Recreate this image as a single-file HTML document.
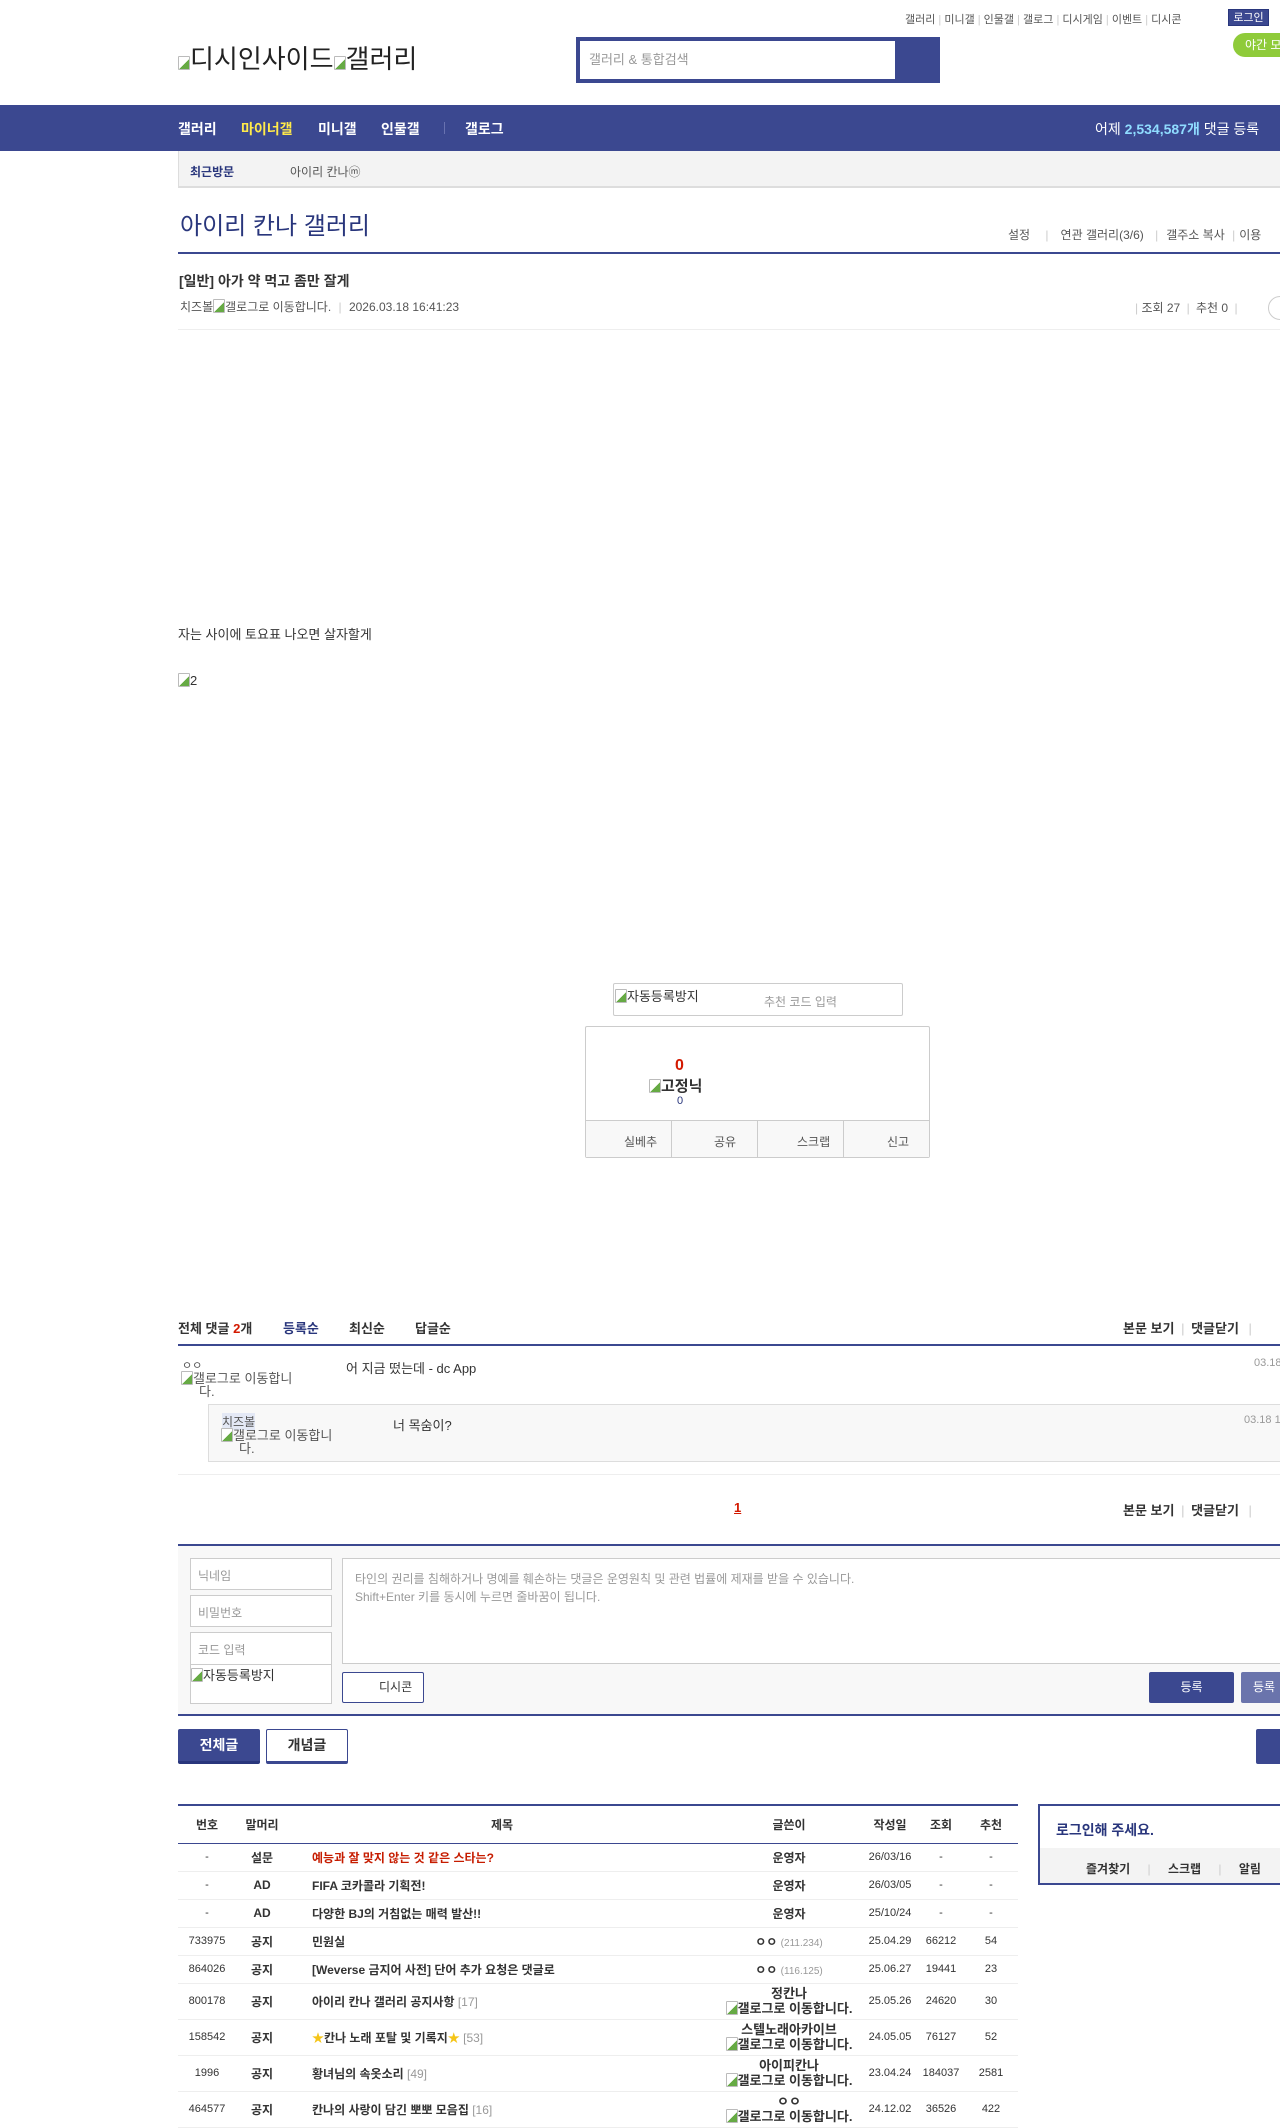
<!DOCTYPE html>
<html><head><meta charset="utf-8"><style>
*{margin:0;padding:0;box-sizing:border-box}
body{width:1280px;height:2125px;overflow:hidden;position:relative;background:#fff;font-family:"Liberation Sans","Noto Sans CJK KR","NanumGothic",sans-serif;color:#333;font-size:12px}
.a{position:absolute;white-space:nowrap}
.bi{display:inline-block;width:12px;height:14px;border:1px solid #bbb;border-radius:1px;vertical-align:-2px;background:linear-gradient(135deg,#fff 55%,#6a4 56%)}
.navy{background:#3b4890}
.b{font-weight:bold}
table{border-collapse:collapse}
</style></head><body>
<div class="a" style="left:905px;top:11px;font-size:11px;color:#555">갤러리 <span style="color:#ccc">|</span> 미니갤 <span style="color:#ccc">|</span> 인물갤 <span style="color:#ccc">|</span> 갤로그 <span style="color:#ccc">|</span> 디시게임 <span style="color:#ccc">|</span> 이벤트 <span style="color:#ccc">|</span> 디시콘</div>
<div class="a navy" style="left:1228px;top:9px;width:41px;height:17px;color:#fff;font-size:11px;line-height:17px;text-align:center;border:1px solid #29367c">로그인</div>
<div class="a" style="left:1233px;top:33px;width:60px;height:24px;background:#8fcb3a;border-radius:12px;color:#fff;font-size:12px;line-height:24px;padding-left:12px">야간 모드</div>
<div class="a" style="left:178px;top:39px;font-size:26px;color:#222"><span class="bi"></span>디시인사이드<span class="bi"></span>갤러리</div>
<div class="a navy" style="left:576px;top:37px;width:364px;height:46px"></div>
<div class="a" style="left:580px;top:41px;width:315px;height:38px;background:#fff;font-size:13px;color:#999;line-height:38px;padding-left:9px">갤러리 &amp; 통합검색</div>
<div class="a navy" style="left:0;top:105px;width:1280px;height:46px"></div>
<div class="a b" style="left:178px;top:119px;font-size:14px;color:#fff">갤러리</div>
<div class="a b" style="left:241px;top:119px;font-size:14px;color:#ffea4a">마이너갤</div>
<div class="a b" style="left:318px;top:119px;font-size:14px;color:#fff">미니갤</div>
<div class="a b" style="left:381px;top:119px;font-size:14px;color:#fff">인물갤</div>
<div class="a" style="left:444px;top:122px;width:1px;height:12px;background:#6872b0"></div>
<div class="a b" style="left:465px;top:119px;font-size:14px;color:#fff">갤로그</div>
<div class="a" style="left:1095px;top:119px;font-size:14px;color:#fff">어제 <b style="color:#8fdcff">2,534,587개</b> 댓글 등록</div>
<div class="a" style="left:178px;top:151px;width:1102px;height:37px;background:#f3f3f3;border-left:1px solid #ddd;border-bottom:2px solid #ddd"></div>
<div class="a b" style="left:190px;top:163px;font-size:12px;color:#29367c">최근방문</div>
<div class="a" style="left:290px;top:163px;font-size:12px;color:#555">아이리 칸나ⓜ</div>
<div class="a" style="left:180px;top:206px;font-size:24px;color:#29367c">아이리 칸나 갤러리</div>
<div class="a" style="left:1008px;top:226px;font-size:12px;color:#555">설정 <span style="color:#ccc;margin:0 12px">|</span>연관 갤러리(3/6) <span style="color:#ccc;margin:0 8px">|</span>갤주소 복사 <span style="color:#ccc;margin:0 4px">|</span>이용</div>
<div class="a navy" style="left:178px;top:252px;width:1102px;height:2px"></div>
<div class="a b" style="left:179px;top:271px;font-size:14px;color:#333">[일반] 아가 약 먹고 좀만 잘게</div>
<div class="a" style="left:180px;top:298px;font-size:12px;color:#555">치즈볼<span class="bi"></span>갤로그로 이동합니다. <span style="color:#ccc;margin:0 4px">|</span> 2026.03.18 16:41:23</div>
<div class="a" style="left:1135px;top:299px;font-size:12px;color:#555"><span style="color:#ccc">|</span> 조회 27 <span style="color:#ccc;margin:0 3px">|</span> 추천 0 <span style="color:#ccc;margin:0 3px">|</span></div>
<div class="a" style="left:1268px;top:296px;width:24px;height:24px;border:1px solid #ccc;border-radius:12px"></div>
<div class="a" style="left:178px;top:329px;width:1102px;height:1px;background:#eee"></div>
<div class="a" style="left:178px;top:624px;font-size:13px;color:#333">자는 사이에 토요표 나오면 살자할게</div>
<div class="a" style="left:178px;top:673px;font-size:13px;color:#333"><span class="bi"></span>2</div>
<div class="a" style="left:613px;top:983px;width:290px;height:33px;border:1px solid #ccc;border-radius:2px"></div>
<div class="a" style="left:615px;top:986px;font-size:13px;color:#333"><span class="bi"></span>자동등록방지</div>
<div class="a" style="left:764px;top:993px;font-size:12px;color:#999">추천 코드 입력</div>
<div class="a" style="left:585px;top:1026px;width:345px;height:132px;border:1px solid #ccc;border-radius:2px"></div>
<div class="a b" style="left:675px;top:1057px;font-size:16px;color:#d31900">0</div>
<div class="a b" style="left:649px;top:1075px;font-size:15px;color:#333"><span class="bi"></span>고정닉</div>
<div class="a" style="left:677px;top:1095px;font-size:11px;color:#29367c">0</div>
<div class="a" style="left:586px;top:1120px;width:343px;height:37px;background:#f8f8f8;border-top:1px solid #ccc"></div>
<div class="a" style="left:671px;top:1120px;width:1px;height:37px;background:#ccc"></div>
<div class="a" style="left:757px;top:1120px;width:1px;height:37px;background:#ccc"></div>
<div class="a" style="left:843px;top:1120px;width:1px;height:37px;background:#ccc"></div>
<div class="a" style="left:624px;top:1133px;font-size:12px;color:#555">실베추</div>
<div class="a" style="left:714px;top:1133px;font-size:12px;color:#555">공유</div>
<div class="a" style="left:797px;top:1133px;font-size:12px;color:#555">스크랩</div>
<div class="a" style="left:887px;top:1133px;font-size:12px;color:#555">신고</div>
<div class="a b" style="left:178px;top:1318px;font-size:13px;color:#333">전체 댓글 <span style="color:#d31900">2</span>개</div>
<div class="a b" style="left:283px;top:1318px;font-size:13px;color:#29367c">등록순</div>
<div class="a b" style="left:349px;top:1318px;font-size:13px;color:#333">최신순</div>
<div class="a b" style="left:415px;top:1318px;font-size:13px;color:#333">답글순</div>
<div class="a b" style="left:1123px;top:1318px;font-size:13px;color:#333">본문 보기 <span style="color:#ccc;font-weight:normal;margin:0 3px">|</span> 댓글닫기 <span style="color:#ccc;font-weight:normal;margin:0 6px">|</span></div>
<div class="a navy" style="left:178px;top:1344px;width:1102px;height:2px"></div>
<div class="a" style="left:182px;top:1357px;font-size:11px;color:#555">ㅇㅇ</div>
<div class="a" style="left:181px;top:1371px;font-size:13px;color:#555;line-height:13px"><span class="bi"></span>갤로그로 이동합니<br>&nbsp;&nbsp;&nbsp;&nbsp;&nbsp;다.</div>
<div class="a" style="left:346px;top:1358px;font-size:13px;color:#333">어 지금 떴는데 - dc App</div>
<div class="a" style="left:1254px;top:1357px;font-size:11px;color:#999">03.18</div>
<div class="a" style="left:208px;top:1404px;width:1080px;height:58px;background:#f8f8f8;border:1px solid #ddd"></div>
<div class="a" style="left:222px;top:1413px;font-size:12px;color:#555;background:#e3e8f5">치즈볼</div>
<div class="a" style="left:221px;top:1428px;font-size:13px;color:#555;line-height:13px"><span class="bi"></span>갤로그로 이동합니<br>&nbsp;&nbsp;&nbsp;&nbsp;&nbsp;다.</div>
<div class="a" style="left:393px;top:1415px;font-size:13px;color:#333">너 목숨이?</div>
<div class="a" style="left:1244px;top:1414px;font-size:11px;color:#999">03.18 1</div>
<div class="a" style="left:178px;top:1474px;width:1102px;height:1px;background:#eee"></div>
<div class="a b" style="left:734px;top:1500px;font-size:13px;color:#d31900;text-decoration:underline">1</div>
<div class="a b" style="left:1123px;top:1500px;font-size:13px;color:#333">본문 보기 <span style="color:#ccc;font-weight:normal;margin:0 3px">|</span> 댓글닫기 <span style="color:#ccc;font-weight:normal;margin:0 6px">|</span></div>
<div class="a" style="left:178px;top:1544px;width:1102px;height:172px;background:#f8f8f8;border-top:2px solid #3b4890;border-bottom:2px solid #3b4890"></div>
<div class="a" style="left:190px;top:1558px;width:142px;height:32px;background:#fff;border:1px solid #ccc;font-size:12px;color:#999;padding:8px 7px">닉네임</div>
<div class="a" style="left:190px;top:1595px;width:142px;height:32px;background:#fff;border:1px solid #ccc;font-size:12px;color:#999;padding:8px 7px">비밀번호</div>
<div class="a" style="left:190px;top:1632px;width:142px;height:72px;background:#fff;border:1px solid #ccc;font-size:12px;color:#999;padding:8px 7px">코드 입력</div>
<div class="a" style="left:190px;top:1664px;width:142px;height:1px;background:#ccc"></div>
<div class="a" style="left:191px;top:1665px;font-size:13px;color:#333"><span class="bi"></span>자동등록방지</div>
<div class="a" style="left:342px;top:1558px;width:960px;height:106px;background:#fff;border:1px solid #ccc;font-size:12px;color:#999;padding:11px 12px;line-height:18px">타인의 권리를 침해하거나 명예를 훼손하는 댓글은 운영원칙 및 관련 법률에 제재를 받을 수 있습니다.<br>Shift+Enter 키를 동시에 누르면 줄바꿈이 됩니다.</div>
<div class="a" style="left:342px;top:1672px;width:82px;height:31px;background:#fff;border:1px solid #3b4890;border-radius:2px;font-size:12px;color:#333;line-height:29px;padding-left:36px">디시콘</div>
<div class="a navy" style="left:1149px;top:1672px;width:85px;height:31px;border-radius:2px;font-size:12px;color:#fff;line-height:31px;text-align:center">등록</div>
<div class="a" style="left:1241px;top:1672px;width:60px;height:31px;background:#6a74ac;border-radius:2px;font-size:12px;color:#fff;line-height:31px;padding-left:12px">등록</div>
<div class="a navy b" style="left:178px;top:1729px;width:82px;height:35px;color:#fff;font-size:14px;line-height:32px;text-align:center;border-bottom:3px solid #29367c;border-radius:2px">전체글</div>
<div class="a b" style="left:266px;top:1729px;width:82px;height:35px;color:#333;font-size:14px;line-height:31px;text-align:center;border:1px solid #3b4890;border-bottom:3px solid #3b4890;border-radius:2px">개념글</div>
<div class="a navy" style="left:1256px;top:1729px;width:30px;height:35px;border-radius:2px"></div>
<div class="a navy" style="left:178px;top:1804px;width:840px;height:2px"></div>
<table class="a" style="left:178px;top:1806px;width:840px;font-size:12px;color:#333">
<tr style="height:37px;border-bottom:1px solid #3b4890" class="b"><td style="width:58px;text-align:center">번호</td><td style="width:52px;text-align:center">말머리</td><td style="text-align:center;width:428px">제목</td><td style="width:146px;text-align:center">글쓴이</td><td style="width:56px;text-align:center">작성일</td><td style="width:46px;text-align:center">조회</td><td style="text-align:center">추천</td></tr>
<tbody style="font-size:12px">
<tr style="height:28px;border-bottom:1px solid #eee"><td align=center style="font-size:11px">-</td><td align=center class="b">설문</td><td class="b" style="color:#c61c00;padding-left:24px">예능과 잘 맞지 않는 것 같은 스타는?</td><td align=center class="b">운영자</td><td align=center style="font-size:11px">26/03/16</td><td align=center style="font-size:11px">-</td><td align=center style="font-size:11px">-</td></tr>
<tr style="height:28px;border-bottom:1px solid #eee"><td align=center style="font-size:11px">-</td><td align=center class="b">AD</td><td class="b" style="padding-left:24px">FIFA 코카콜라 기획전!</td><td align=center class="b">운영자</td><td align=center style="font-size:11px">26/03/05</td><td align=center style="font-size:11px">-</td><td align=center style="font-size:11px">-</td></tr>
<tr style="height:28px;border-bottom:1px solid #eee"><td align=center style="font-size:11px">-</td><td align=center class="b">AD</td><td class="b" style="padding-left:24px">다양한 BJ의 거침없는 매력 발산!!</td><td align=center class="b">운영자</td><td align=center style="font-size:11px">25/10/24</td><td align=center style="font-size:11px">-</td><td align=center style="font-size:11px">-</td></tr>
<tr style="height:28px;border-bottom:1px solid #eee"><td align=center style="font-size:11px">733975</td><td align=center class="b">공지</td><td class="b" style="padding-left:24px">민원실</td><td align=center class="b">ㅇㅇ <span style="font-weight:normal;color:#999;font-size:10px">(211.234)</span></td><td align=center style="font-size:11px">25.04.29</td><td align=center style="font-size:11px">66212</td><td align=center style="font-size:11px">54</td></tr>
<tr style="height:28px;border-bottom:1px solid #eee"><td align=center style="font-size:11px">864026</td><td align=center class="b">공지</td><td class="b" style="padding-left:24px">[Weverse 금지어 사전] 단어 추가 요청은 댓글로</td><td align=center class="b">ㅇㅇ <span style="font-weight:normal;color:#999;font-size:10px">(116.125)</span></td><td align=center style="font-size:11px">25.06.27</td><td align=center style="font-size:11px">19441</td><td align=center style="font-size:11px">23</td></tr>
<tr style="height:36px;border-bottom:1px solid #eee"><td align=center style="font-size:11px">800178</td><td align=center class="b">공지</td><td class="b" style="padding-left:24px">아이리 칸나 갤러리 공지사항 <span style="font-weight:normal;color:#999">[17]</span></td><td align=center class="b" style="line-height:15px;font-size:13px">정칸나<br><span class="bi"></span>갤로그로 이동합니다.</td><td align=center style="font-size:11px">25.05.26</td><td align=center style="font-size:11px">24620</td><td align=center style="font-size:11px">30</td></tr>
<tr style="height:36px;border-bottom:1px solid #eee"><td align=center style="font-size:11px">158542</td><td align=center class="b">공지</td><td class="b" style="padding-left:24px"><span style="color:#f5c518">★</span>칸나 노래 포탈 및 기록지<span style="color:#f5c518">★</span> <span style="font-weight:normal;color:#999">[53]</span></td><td align=center class="b" style="line-height:15px;font-size:13px">스텔노래아카이브<br><span class="bi"></span>갤로그로 이동합니다.</td><td align=center style="font-size:11px">24.05.05</td><td align=center style="font-size:11px">76127</td><td align=center style="font-size:11px">52</td></tr>
<tr style="height:36px;border-bottom:1px solid #eee"><td align=center style="font-size:11px">1996</td><td align=center class="b">공지</td><td class="b" style="padding-left:24px">황녀님의 속옷소리 <span style="font-weight:normal;color:#999">[49]</span></td><td align=center class="b" style="line-height:15px;font-size:13px">아이피칸나<br><span class="bi"></span>갤로그로 이동합니다.</td><td align=center style="font-size:11px">23.04.24</td><td align=center style="font-size:11px">184037</td><td align=center style="font-size:11px">2581</td></tr>
<tr style="height:36px;border-bottom:1px solid #eee"><td align=center style="font-size:11px">464577</td><td align=center class="b">공지</td><td class="b" style="padding-left:24px">칸나의 사랑이 담긴 뽀뽀 모음집 <span style="font-weight:normal;color:#999">[16]</span></td><td align=center class="b" style="line-height:15px;font-size:13px">ㅇㅇ<br><span class="bi"></span>갤로그로 이동합니다.</td><td align=center style="font-size:11px">24.12.02</td><td align=center style="font-size:11px">36526</td><td align=center style="font-size:11px">422</td></tr>
</tbody></table>
<div class="a" style="left:1038px;top:1804px;width:260px;height:81px;border:2px solid #3b4890;border-right:none"></div>
<div class="a b" style="left:1056px;top:1820px;font-size:14px;color:#29367c">로그인해 주세요.</div>
<div class="a" style="left:1040px;top:1848px;width:250px;height:35px;background:#f3f3f3"></div>
<div class="a b" style="left:1086px;top:1860px;font-size:12px;color:#333">즐겨찾기 <span style="color:#ccc;font-weight:normal;margin:0 14px">|</span> 스크랩 <span style="color:#ccc;font-weight:normal;margin:0 14px">|</span> 알림</div>
</body></html>
